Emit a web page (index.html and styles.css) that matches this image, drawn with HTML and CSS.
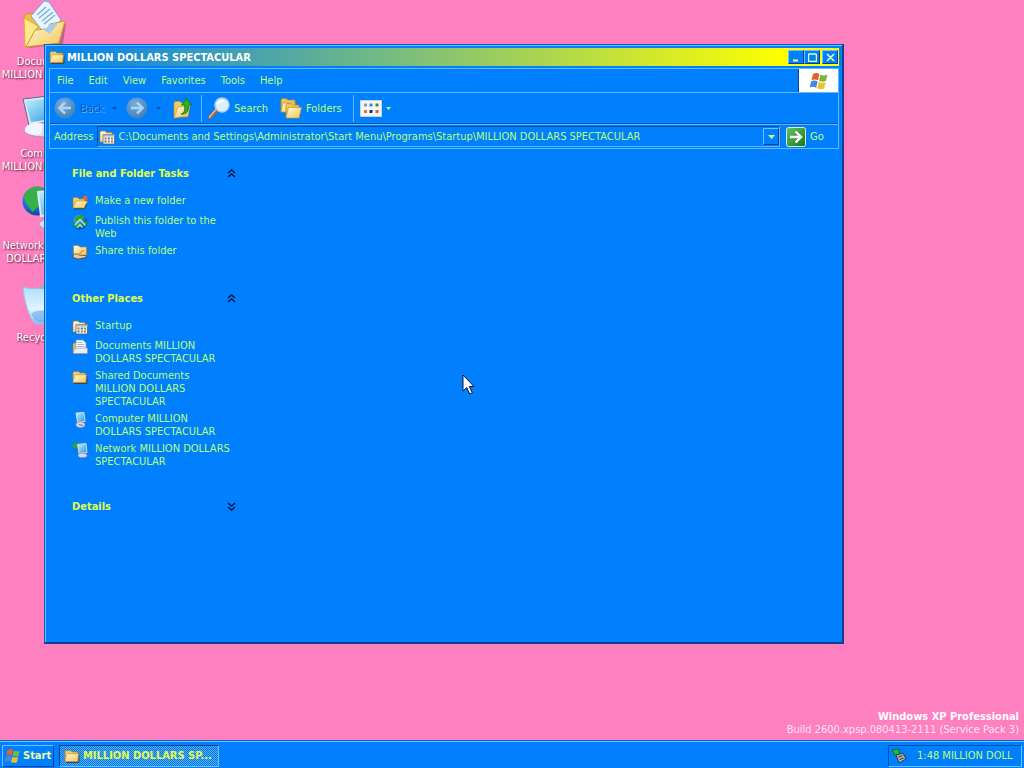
FILE: index.html
```html
<!DOCTYPE html>
<html lang="en">
<head>
  <meta charset="UTF-8" />
  <meta name="viewport" content="width=device-width, initial-scale=1.0"/>
  <title>MILLION DOLLARS SPECTACULAR</title>
  <link rel="stylesheet" href="styles.css">
</head>
<body>

  <!-- shared icons -->
  <svg class="sprite" aria-hidden="true">
    <defs>
      <linearGradient id="gFolder" x1="0" y1="0" x2="1" y2="1">
        <stop offset="0" stop-color="#fffcd8"/><stop offset="1" stop-color="#f4c458"/>
      </linearGradient>
      <linearGradient id="gScreen" x1="0" y1="0" x2="1" y2="1">
        <stop offset="0" stop-color="#c4f2ff"/><stop offset="1" stop-color="#2496e0"/>
      </linearGradient>
      <linearGradient id="gBin" x1="0" y1="0" x2="0" y2="1">
        <stop offset="0" stop-color="#a8dcf8"/><stop offset=".6" stop-color="#e2f5ff"/><stop offset="1" stop-color="#7cbcf0"/>
      </linearGradient>
      <radialGradient id="gGlobe" cx=".35" cy=".3" r=".8">
        <stop offset="0" stop-color="#7cc8ff"/><stop offset=".5" stop-color="#1c70d8"/><stop offset="1" stop-color="#083c98"/>
      </radialGradient>
      <radialGradient id="gNav" cx=".4" cy=".3" r=".8">
        <stop offset="0" stop-color="#78acd8"/><stop offset="1" stop-color="#3c7cb8"/>
      </radialGradient>
      <linearGradient id="gGo" x1="0" y1="0" x2="1" y2="1">
        <stop offset="0" stop-color="#6cc468"/><stop offset="1" stop-color="#107818"/>
      </linearGradient>
    </defs>
    <symbol id="folder" viewBox="0 0 16 16">
      <path d="M2 14.500h13v-8" fill="none" stroke="#444" stroke-width="1"/>
      <path d="M1 13V4l1-1.500h4.500L8 4h5.500v9z" fill="#f4cc68" stroke="#a87c28" stroke-width=".6"/>
      <path d="M1 13.500L2.500 6.500l1-.8h11l-.8 7.800z" fill="url(#gFolder)" stroke="#b88428" stroke-width=".6"/>
    </symbol>
    <symbol id="folder-new" viewBox="0 0 16 16">
      <path d="M1 13V3.500h5l1 1.500h6v8z" fill="#f4cc68" stroke="#a87c28" stroke-width=".6"/>
      <path d="M1 14L4 7h11.500l-3 7z" fill="url(#gFolder)" stroke="#b88428" stroke-width=".6"/>
      <path d="M10 5c1-3 3-3.500 4-2.500l1-1 .5 4.500h-4l1.200-1.500z" fill="#e86820"/>
      <path d="M2 15h10.500l2-5" fill="none" stroke="#333" stroke-width=".8"/>
    </symbol>
    <symbol id="folder-share" viewBox="0 0 16 16">
      <path d="M1.500 11.500V1.500h5L8 3h6.500v8.500z" fill="url(#gFolder)" stroke="#a87c28" stroke-width=".6"/>
      <path d="M1 11c2-1.500 4-1.500 6 0l7 .5v2l-8 1.500-5-1.500z" fill="#f0c8a0" stroke="#4c3420" stroke-width=".7"/>
      <path d="M7 10l5-4" stroke="#f09028" stroke-width="1.500"/>
    </symbol>
    <symbol id="startup" viewBox="0 0 16 16">
      <path d="M1 13V3.500L2 2h4l1.500 1.500H13V13z" fill="url(#gFolder)" stroke="#a87c28" stroke-width=".6"/>
      <path d="M4 5.500h11.500v9.500H4z" fill="#f4f4ec" stroke="#555" stroke-width=".7"/>
      <path d="M4 5.500h11.500v2H4z" fill="#a8b4c4"/>
      <path d="M5.500 8.500h2v2h-2zM12 11.500h2v2h-2z" fill="#d46844"/>
      <path d="M8.800 8.500h2v2h-2zM5.500 11.500h2v2h-2z" fill="#4874bc"/>
      <path d="M12 8.500h2v2h-2zM8.800 11.500h2v2h-2z" fill="#64a05c"/>
    </symbol>
    <symbol id="docs" viewBox="0 0 16 16">
      <path d="M1 14V5l1-1h11v10z" fill="#f0c05c" stroke="#a87c28" stroke-width=".6"/>
      <path d="M4 11V1h7l3 3v7z" fill="#fff" stroke="#7c98b8" stroke-width=".7"/>
      <path d="M5.500 3.500h5M5.500 5.500h7M5.500 7.500h7" stroke="#88a8d0" stroke-width=".8"/>
      <path d="M1 14.500l2-5.500h12.500v5.500z" fill="#e8eef8" stroke="#8c94a4" stroke-width=".6"/>
    </symbol>
    <symbol id="globe" viewBox="0 0 16 16">
      <circle cx="8" cy="8" r="7.500" fill="url(#gGlobe)"/>
      <path d="M2 5c2-4 8-5 11-2-1 2-3 1-4 3S4 8 2 5zM1 9c2-1 4 0 5 2s0 3-1 3.500C3 13 1.500 11 1 9zm14-1c-3-1-5 1-4 3s2 2 2 2c1-1 2-3 2-5z" fill="#2ca43c"/>
      <path d="M3 11l5-5.500 5 5.500M5.500 13.500L8 10.500l2.500 3" fill="none" stroke="#b8f4a0" stroke-width="1.300"/>
    </symbol>
    <symbol id="computer" viewBox="0 0 16 16">
      <path d="M4 1l8-.5 1 9-7.500.5z" fill="url(#gScreen)" stroke="#d0dcec" stroke-width="1"/>
      <path d="M4 12.500c0-2 3-2.500 5-2.500s4 1 4 3-3 2.500-5 2.500-4-1-4-3z" fill="#d4d8ec" stroke="#8c90b0" stroke-width=".6"/>
      <path d="M7 12.500l4 1" stroke="#c05050"/>
    </symbol>
    <symbol id="network" viewBox="0 0 16 16">
      <circle cx="5" cy="5" r="4.500" fill="#1878c8"/>
      <path d="M.5 4c1-4 6-4 8-2-1 2-2 2-3 3s-4 2-5-1z" fill="#2ca43c"/>
      <path d="M5.500 2.500l8.500-1 1 9-8 .8z" fill="url(#gScreen)" stroke="#d0dcec" stroke-width="1"/>
      <path d="M6 13.300c0-1.500 2.500-2 5-2s4 .8 4 2.300-2 2-4.500 2-4.500-.8-4.500-2.300z" fill="#d4d8ec" stroke="#8c90b0" stroke-width=".6"/>
    </symbol>
    <symbol id="flag" viewBox="0 0 20 18">
      <path d="M4 2c2.500-1.500 4.500-1 6.500 0L9 8.300C7 7.300 5 7 2.500 8z" fill="#e8602c"/>
      <path d="M11.500 2.600c2 1 4.500 1.200 7 .2L17 9c-2.500 1-5 .8-7-.2z" fill="#74b840"/>
      <path d="M2.200 9.200c2.500-1 4.500-.7 6.500.3L7.200 15.700c-2-1-4-1.300-6.500-.3z" fill="#4088e0"/>
      <path d="M9.700 10c2 1 4.500 1.200 7 .2l-1.500 6.200c-2.500 1-5 .8-7-.2z" fill="#f4c028"/>
    </symbol>
    <symbol id="up2" viewBox="0 0 9 9">
      <path d="M1 4l3.500-3L8 4M1 8l3.500-3L8 8" fill="none" stroke="#001848" stroke-width="1.600"/>
    </symbol>
    <symbol id="down2" viewBox="0 0 9 9">
      <path d="M1 1l3.500 3L8 1M1 5l3.500 3L8 5" fill="none" stroke="#001848" stroke-width="1.600"/>
    </symbol>
  </svg>

  <main class="desktop">
    <div class="shortcuts">
      <a class="shortcut" href="#">
        <svg viewBox="0 0 48 48">
          <path d="M8 48l34-4 3-21z" fill="#804060" opacity=".5"/>
          <path d="M3 17l2-3 8-1 4 3 22 6-4 20-30 5z" fill="#f0c040" stroke="#c89828"/>
          <path d="M10 16L23 1l5 1 12 18-14 17z" fill="#e8f6ff" stroke="#70a8dc"/>
          <path d="M16 15l9-8M18 18l11-9M21 21l11-9M23 24l11-9" stroke="#7cb0dc" stroke-width="1.400"/>
          <path d="M3 18l14 8-10 20-3 1z" fill="#ffe888" stroke="#dca830" stroke-width=".8"/>
          <path d="M5 47l9-17 12-1 3-5 15-3-6 22z" fill="url(#gFolder)" stroke="#d09828"/>
          <path d="M21 29l5-1 3-4 8-1-8 11z" fill="#a8cce8"/>
        </svg>
        <span>Documents<br>MILLION DOLLA...</span>
      </a>
      <a class="shortcut" href="#">
        <svg viewBox="0 0 48 48">
          <path d="M2 7l34-4 4 25-32 5z" fill="#dce8f4" stroke="#506c90"/>
          <path d="M4 9l30-3 4 20-28 4z" fill="url(#gScreen)"/>
          <ellipse cx="22" cy="38" rx="19" ry="7" fill="#dcdcf0" stroke="#9898c0"/>
          <path d="M4 36c4-6 14-6 18-4l-2 10C12 44 2 42 4 36z" fill="#f4f4ff"/>
        </svg>
        <span>Computer<br>MILLION DOLLA...</span>
      </a>
      <a class="shortcut" href="#">
        <svg viewBox="0 0 48 48">
          <circle cx="16" cy="17" r="14.500" fill="url(#gGlobe)"/>
          <path d="M3 12C6 4 14 1 22 4c-2 5-6 3-6 8s4 4 3 8-5 4-7 8C8 24 4 18 3 12z" fill="#38b048"/>
          <path d="M17 8l25-3 4 23-26 4z" fill="url(#gScreen)" stroke="#dce8f4" stroke-width="2"/>
          <ellipse cx="34" cy="40" rx="16" ry="6" fill="#dcdcf0" stroke="#9898c0"/>
        </svg>
        <span>Network MILLION<br>DOLLARS SPE...</span>
      </a>
      <a class="shortcut" href="#">
        <svg viewBox="0 0 48 48">
          <path d="M2 11c9 3 29 2 42-2l-7 36c-7 6-21 5-25 0C7 38 3 24 2 11z" fill="url(#gBin)" stroke="#90c4e8"/>
          <path d="M17 12l6-3 19 1-5 4z" fill="#84b8b8"/>
          <path d="M10 38c7-6 12-1 24-7l-3 13c-6 3-12 3-17 0z" fill="#68acec" opacity=".6"/>
        </svg>
        <span>Recycle Bin</span>
      </a>
    </div>

    <section class="window">
      <header class="titlebar">
        <svg class="icon"><use href="#folder"/></svg>
        <h1>MILLION DOLLARS SPECTACULAR</h1>
        <button class="ctl" aria-label="Minimize"><svg viewBox="0 0 9 9"><path d="M1 7.500h5" stroke-width="2"/></svg></button>
        <button class="ctl" aria-label="Maximize"><svg viewBox="0 0 9 9"><path d="M.5 1h8M.5 1v7.500h8V1" stroke-width="1.500"/></svg></button>
        <button class="ctl close" aria-label="Close"><svg viewBox="0 0 9 9"><path d="M1 1l7 7M8 1L1 8" stroke-width="1.700"/></svg></button>
      </header>

      <div class="bars">
        <nav class="menubar">
          <button>File</button>
          <button>Edit</button>
          <button>View</button>
          <button>Favorites</button>
          <button>Tools</button>
          <button>Help</button>
          <div class="brand"><svg viewBox="0 0 20 18"><use href="#flag"/></svg></div>
        </nav>

        <div class="toolbar">
          <button class="back" disabled>
            <svg class="big" viewBox="0 0 22 22"><circle cx="11" cy="11" r="10.500" fill="url(#gNav)"/><path d="M17 11H6M11 5.500L5.500 11l5.500 5.500" fill="none" stroke="#acd4f4" stroke-width="2.500"/></svg>
            Back
          </button>
          <svg class="caret dim" viewBox="0 0 5 3"><path d="M0 0h5L2.500 3z"/></svg>
          <button class="forward" disabled aria-label="Forward">
            <svg class="big" viewBox="0 0 22 22"><circle cx="11" cy="11" r="10.500" fill="url(#gNav)"/><path d="M5 11h11M11 5.500l5.500 5.500-5.500 5.500" fill="none" stroke="#acd4f4" stroke-width="2.500"/></svg>
          </button>
          <svg class="caret dim" viewBox="0 0 5 3"><path d="M0 0h5L2.500 3z"/></svg>
          <button class="up" aria-label="Up">
            <svg class="big" viewBox="0 0 22 22">
              <path d="M3 20V6l1-1.500h5L10.500 6H17v14z" fill="#f0d060" stroke="#b89030" stroke-width=".7"/>
              <path d="M3 21l4-11 12-2-2 11z" fill="url(#gFolder)" stroke="#c09838" stroke-width=".7"/>
              <path d="M10 17c4-1 4-5 3.500-9h-3L15.500 1.500 20.500 8h-3c.5 6-2 10-7.500 9z" fill="#30b020" stroke="#087010" stroke-width=".7"/>
            </svg>
          </button>
          <i class="divider"></i>
          <button class="search">
            <svg class="big" viewBox="0 0 22 22">
              <path d="M2 20.500l6-7" stroke="#a86830" stroke-width="3.500" stroke-linecap="round"/>
              <path d="M1.500 20l6-7" stroke="#f0bc88" stroke-width="1.400" stroke-linecap="round"/>
              <circle cx="14" cy="8" r="7" fill="#d8f0ff" stroke="#b8c8e0" stroke-width="1.500"/>
              <path d="M9.500 7c1-3 4-4 6.500-3" fill="none" stroke="#fff" stroke-width="2"/>
            </svg>
            Search
          </button>
          <button class="folders">
            <svg class="big" viewBox="0 0 22 22">
              <path d="M1 15V3l1-1.500h4L8 3h7v12z" fill="#f0c458" stroke="#b08828" stroke-width=".7"/>
              <path d="M1 15L3 6h12l-1 9z" fill="url(#gFolder)" stroke="#c09838" stroke-width=".7"/>
              <path d="M6 20V8l1-1.500h4L12.500 8H19v12z" fill="#f0c458" stroke="#b08828" stroke-width=".7"/>
              <path d="M6 21l2.500-10.500h13L19 21z" fill="url(#gFolder)" stroke="#c09838" stroke-width=".7"/>
            </svg>
            Folders
          </button>
          <i class="divider"></i>
          <button class="views" aria-label="Views">
            <svg class="big" viewBox="0 0 22 22">
              <path d="M.5 3.500h21v16H.5z" fill="#f8f8f0" stroke="#c4d4e4"/>
              <path d="M4 6.500h3v3H4z" fill="#8898b8"/><path d="M9.500 6.500h3v3h-3z" fill="#5878c0"/><path d="M15.500 6.500h3v3h-3z" fill="#388848"/>
              <path d="M4 13h3v3H4z" fill="#d87858"/><path d="M9.500 13h3v3h-3z" fill="#182c78"/><path d="M15.500 13h3v3h-3z" fill="#c8684c"/>
            </svg>
            <svg class="caret" viewBox="0 0 5 3"><path d="M0 0h5L2.500 3z"/></svg>
          </button>
        </div>

        <div class="addressbar">
          <label for="address">Address</label>
          <div class="combo">
            <svg class="icon"><use href="#startup"/></svg>
            <input type="text" id="address" value="C:\Documents and Settings\Administrator\Start Menu\Programs\Startup\MILLION DOLLARS SPECTACULAR">
            <button aria-label="Show addresses"><svg viewBox="0 0 7 4"><path d="M0 0h7L3.500 4z"/></svg></button>
          </div>
          <button class="go">
            <svg viewBox="0 0 20 20"><rect x=".5" y=".5" width="19" height="19" rx="2" fill="url(#gGo)" stroke="#d0f0d0"/><path d="M4 10h11M9.500 4.500L15 10l-5.500 5.500" fill="none" stroke="#fff" stroke-width="2.400"/></svg>
            Go
          </button>
        </div>
      </div>

      <aside class="tasks">
        <section>
          <h2>File and Folder Tasks <svg><use href="#up2"/></svg></h2>
          <ul>
            <li><svg class="icon"><use href="#folder-new"/></svg><a href="#">Make a new folder</a></li>
            <li><svg class="icon"><use href="#globe"/></svg><a href="#">Publish this folder to the Web</a></li>
            <li><svg class="icon"><use href="#folder-share"/></svg><a href="#">Share this folder</a></li>
          </ul>
        </section>
        <section>
          <h2>Other Places <svg><use href="#up2"/></svg></h2>
          <ul>
            <li><svg class="icon"><use href="#startup"/></svg><a href="#">Startup</a></li>
            <li><svg class="icon"><use href="#docs"/></svg><a href="#">Documents MILLION DOLLARS SPECTACULAR</a></li>
            <li><svg class="icon"><use href="#folder"/></svg><a href="#">Shared Documents MILLION DOLLARS SPECTACULAR</a></li>
            <li><svg class="icon"><use href="#computer"/></svg><a href="#">Computer MILLION DOLLARS SPECTACULAR</a></li>
            <li><svg class="icon"><use href="#network"/></svg><a href="#">Network MILLION DOLLARS SPECTACULAR</a></li>
          </ul>
        </section>
        <section>
          <h2>Details <svg><use href="#down2"/></svg></h2>
        </section>
      </aside>
    </section>

    <div class="version">
      <strong>Windows XP Professional</strong>
      <span>Build 2600.xpsp.080413-2111 (Service Pack 3)</span>
    </div>

    <svg class="cursor" viewBox="0 0 13 21"><path d="M1 1v16l3.700-3.500 3 6.500 2.600-1.200-3-6.300H12z" fill="#fff" stroke="#101030"/></svg>
  </main>

  <footer class="taskbar">
    <button class="start"><svg viewBox="0 0 20 18"><use href="#flag"/></svg>Start</button>
    <button class="task"><svg class="icon"><use href="#folder"/></svg><span>MILLION DOLLARS SP...</span></button>
    <div class="tray">
      <svg class="icon" viewBox="0 0 16 16">
        <path d="M4 7l7-2 3 6-7 4z" fill="#a8b0b8" stroke="#303840"/>
        <path d="M6.500 9l4-1.500M7.500 11.500l4-1.500" stroke="#303840"/>
        <path d="M0 2l7-1v6l-2-1-3 2V5z" fill="#20c030" stroke="#086018" stroke-width=".7"/>
      </svg>
      <span>1:48 MILLION DOLL</span>
    </div>
  </footer>

</body>
</html>
```
FILE: styles.css
```css
* {
  box-sizing: border-box;
}

body {
  margin: 0;
  height: 100vh;
  display: flex;
  flex-direction: column;
  overflow: hidden;
  background: #ff80c0;
  color: #b8ff78;
  font: 11px/13px Tahoma, "DejaVu Sans Condensed", "Noto Sans", sans-serif;
}

button, input {
  font: inherit;
  color: inherit;
  background: none;
  border: none;
  padding: 0;
  margin: 0;
}

a {
  color: inherit;
  text-decoration: none;
}

svg {
  flex: none;
}

.sprite {
  position: absolute;
  width: 0;
  height: 0;
}

.icon {
  width: 16px;
  height: 16px;
}

.desktop {
  flex: 1;
  position: relative;
  min-height: 0;
}

/* desktop icons */
.shortcuts {
  width: 90px;
  display: grid;
  grid-auto-rows: 92px;
}

.shortcut {
  display: flex;
  flex-direction: column;
  align-items: center;
  gap: 7px;
  color: #fff;
  text-align: center;
  white-space: nowrap;
  text-shadow: 1px 1px 2px #401030;
}

.shortcut svg {
  width: 48px;
  height: 48px;
}

/* explorer window */
.window {
  position: absolute;
  left: 44px;
  top: 44px;
  width: 800px;
  height: 600px;
  padding: 3px;
  background: #0080ff;
  border: 1px solid #0060c0;
  border-right: 2px solid #10408c;
  border-bottom: 2px solid #10408c;
  box-shadow: inset 1px 1px #70c0ff;
}

.titlebar {
  display: flex;
  align-items: center;
  height: 18px;
  padding: 0 1px;
  background: linear-gradient(to right, #0080f0, #ff0 calc(100% - 54px));
}

.titlebar h1 {
  flex: 1;
  margin: 0 0 0 2px;
  font-size: 11px;
  color: #fff;
}

.ctl {
  display: flex;
  align-items: center;
  justify-content: center;
  width: 16px;
  height: 14px;
  background: #0080ff;
  border: 1px solid #70c0ff;
  border-right-color: #10408c;
  border-bottom-color: #10408c;
}

.ctl.close {
  margin-left: 2px;
}

.ctl svg {
  width: 9px;
  height: 9px;
  fill: none;
  stroke: #e0ffb0;
}

.bars {
  margin: 2px 0 0 1px;
  border: 1px solid #60b8ff;
}

.menubar {
  display: flex;
  height: 24px;
  border-bottom: 1px solid #60b8ff;
}

.menubar button {
  padding: 0 8px 0 7px;
}

.brand {
  display: flex;
  align-items: center;
  justify-content: center;
  width: 40px;
  margin-left: auto;
  background: #fff;
  border-left: 1px solid #10408c;
}

.brand svg {
  width: 20px;
  height: 18px;
}

.toolbar {
  display: flex;
  align-items: center;
  height: 31px;
  padding: 0 4px;
  border-bottom: 1px solid #0058b0;
}

.toolbar button {
  display: flex;
  align-items: center;
  gap: 4px;
}

.toolbar .big {
  width: 22px;
  height: 22px;
}

.toolbar .back {
  color: #0058b8;
  text-shadow: 1px 1px #58b0ff;
}

.caret {
  width: 5px;
  height: 3px;
  fill: #b8ff78;
}

.caret.dim {
  margin: 0 9px 0 8px;
  fill: #0050a8;
}

.toolbar .up {
  margin-left: 1px;
}

.divider {
  width: 1px;
  height: 27px;
  margin: 0 6px 0 8px;
  background: #60b8ff;
}

.toolbar .folders {
  margin-left: 12px;
}

.toolbar .folders + .divider {
  margin-left: 11px;
}

.addressbar {
  display: flex;
  align-items: center;
  height: 24px;
  padding: 0 4px;
  border-top: 1px solid #60b8ff;
}

.combo {
  flex: 1;
  display: flex;
  align-items: center;
  height: 21px;
  margin: 0 6px 0 4px;
  padding-left: 1px;
  border: 1px solid #0050a8;
  border-right-color: #60b8ff;
  border-bottom-color: #60b8ff;
}

.combo input {
  flex: 1;
  min-width: 0;
  margin-left: 3px;
  outline: none;
}

.combo button {
  display: flex;
  align-items: center;
  justify-content: center;
  width: 16px;
  height: 17px;
  border: 1px solid #70c0ff;
  border-right-color: #10408c;
  border-bottom-color: #10408c;
}

.combo button svg {
  width: 7px;
  height: 4px;
  fill: #d0ff70;
}

.go {
  display: flex;
  align-items: center;
  gap: 4px;
  width: 48px;
}

.go svg {
  width: 20px;
  height: 20px;
}

/* side pane */
.tasks {
  width: 192px;
  padding: 12px 0 0 24px;
}

.tasks section {
  margin-bottom: 26px;
}

.tasks h2 {
  display: flex;
  align-items: center;
  justify-content: space-between;
  height: 24px;
  margin: 0;
  padding-right: 4px;
  font-size: 11px;
  color: #e0ff48;
}

.tasks h2 svg {
  width: 9px;
  height: 9px;
}

.tasks ul {
  display: flex;
  flex-direction: column;
  gap: 4px;
  margin: 9px 0 0;
  padding: 0;
  list-style: none;
}

.tasks li {
  display: flex;
  gap: 7px;
  padding-right: 8px;
}

/* bottom right text */
.version {
  position: absolute;
  right: 5px;
  bottom: 4px;
  display: flex;
  flex-direction: column;
  text-align: right;
  color: #fff;
}

.version span {
  color: #ffe4f2;
}

.cursor {
  position: absolute;
  left: 462px;
  top: 374px;
  width: 13px;
  height: 21px;
}

/* taskbar */
.taskbar {
  display: flex;
  align-items: center;
  gap: 5px;
  height: 28px;
  padding: 2px 2px 0 2px;
  background: #0080ff;
  border-top: 1px solid #0068d0;
  box-shadow: inset 0 1px #70c0ff;
}

.taskbar button {
  display: flex;
  align-items: center;
  height: 22px;
  font-weight: bold;
  color: #e0ff48;
}

.start {
  width: 52px;
  gap: 2px;
  border: 1px solid #70c0ff;
  border-right-color: #10408c;
  border-bottom-color: #10408c;
}

.start svg {
  width: 17px;
  height: 16px;
}

.taskbar .start {
  padding-left: 1px;
  color: #f0ffa0;
}

.taskbar .task {
  width: 160px;
  gap: 3px;
  padding: 0 4px;
  border: 1px solid #10408c;
  border-right-color: #70c0ff;
  border-bottom-color: #70c0ff;
  background: repeating-conic-gradient(#58acf4 0 25%, #0078ec 0 50%) 0 0 / 2px 2px;
  white-space: nowrap;
}

.tray {
  display: flex;
  align-items: center;
  gap: 9px;
  width: 134px;
  height: 22px;
  margin-left: auto;
  padding: 0 3px;
  border: 1px solid #0050a8;
  border-right-color: #70c0ff;
  border-bottom-color: #70c0ff;
  white-space: nowrap;
}
```
